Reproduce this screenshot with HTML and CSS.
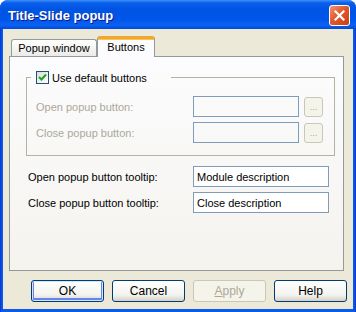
FILE: index.html
```html
<!DOCTYPE html>
<html lang="en">
<head>
  <meta charset="UTF-8" />
  <title>Title-Slide popup</title>
  <link rel="stylesheet" href="styles.css">
</head>
<body>
  <div class="window">
    <div class="titlebar">
      <span class="title">Title-Slide popup</span>
      <button class="close" title="Close">
        <svg width="11" height="11" viewBox="0 0 11 11"><path d="M1.5 1.5 L9.5 9.5 M9.5 1.5 L1.5 9.5" stroke="#fff" stroke-width="2.2" stroke-linecap="square"/></svg>
      </button>
    </div>

    <div class="frame">
      <div class="tabs">
        <div class="tab">Popup window</div>
        <div class="tab active">Buttons</div>
      </div>

      <div class="panel">
        <fieldset class="group">
          <legend>
            <label class="check">
              <span class="box"><svg width="9" height="9" viewBox="0 0 9 9"><path d="M1 4 L3.5 6.5 L8 1.5" fill="none" stroke="#21a121" stroke-width="2"/></svg></span>
              Use default buttons
            </label>
          </legend>
          <div class="row disabled">
            <label>Open popup button:</label>
            <input type="text" disabled>
            <button class="browse" disabled>...</button>
          </div>
          <div class="row disabled">
            <label>Close popup button:</label>
            <input type="text" disabled>
            <button class="browse" disabled>...</button>
          </div>
        </fieldset>

        <div class="fields">
          <div class="row">
            <label>Open popup button tooltip:</label>
            <input type="text" class="wide" value="Module description">
          </div>
          <div class="row">
            <label>Close popup button tooltip:</label>
            <input type="text" class="wide" value="Close description">
          </div>
        </div>
      </div>

      <div class="actions">
        <button class="btn default">OK</button>
        <button class="btn">Cancel</button>
        <button class="btn" disabled><u>A</u>pply</button>
        <button class="btn">Help</button>
      </div>
    </div>
  </div>
</body>
</html>
```

FILE: styles.css
```css
body {
  margin: 0;
  font-family: "Liberation Sans", Arial, sans-serif;
  font-size: 11px;
  color: #000;
  background: #fff;
}

.window {
  width: 356px;
  height: 312px;
  background: linear-gradient(90deg, #0831d9 0, #0b5be8 2px, #0b5be8 354px, #0831d9 356px);
  border-radius: 8px 8px 0 0;
  display: flex;
  flex-direction: column;
  overflow: hidden;
}

.titlebar {
  height: 29px;
  flex: none;
  display: flex;
  align-items: center;
  justify-content: space-between;
  padding: 0 6px 0 8px;
  background: linear-gradient(#3d8ff7 0, #0a5eec 3px, #0054e3 9px, #0056ea 20px, #0a62f2 25px, #004ad9 29px);
}

.title {
  color: #fff;
  font-weight: bold;
  font-size: 13px;
  text-shadow: 1px 1px #0a1883;
  margin-top: 1px;
}

.close {
  width: 21px;
  height: 21px;
  padding: 0;
  border: 1px solid #fff;
  border-radius: 3px;
  background: linear-gradient(135deg, #f59272 0, #e2582d 45%, #c8400f 100%);
  display: flex;
  align-items: center;
  justify-content: center;
  margin-top: 2px;
}

.frame {
  flex: 1;
  margin: 0 3px 3px 3px;
  background: #ece9d8;
  display: flex;
  flex-direction: column;
}

.tabs {
  height: 20px;
  margin-top: 7px;
  padding-left: 8px;
  display: flex;
  align-items: flex-end;
}

.tab {
  box-sizing: border-box;
  width: 86px;
  height: 17px;
  border: 1px solid #919b9c;
  border-bottom: none;
  border-radius: 3px 3px 0 0;
  background: linear-gradient(#ffffff, #ecebe6);
  text-align: center;
  line-height: 17px;
}

.tab.active {
  width: 58px;
  height: 21px;
  margin-bottom: -1px;
  position: relative;
  border-top: 3px solid #f0a63a;
  box-shadow: inset 0 1px 0 #ffc83c;
  background: #fcfcfe;
  line-height: 16px;
}

.panel {
  box-sizing: border-box;
  width: 335px;
  height: 215px;
  margin-left: 6px;
  border: 1px solid #919b9c;
  background: linear-gradient(#fcfcfe, #f4f3ee);
  padding: 14px 0 0 16px;
}

.group {
  box-sizing: border-box;
  width: 309px;
  margin: 0;
  padding: 12px 0 12px 4px;
  border: 1px solid #d0d0bf;
  border-color: #b5b2a4;
}

.group legend {
  box-sizing: border-box;
  width: 140px;
  padding: 0 0 0 5px;
}

.check {
  display: flex;
  align-items: center;
  gap: 3px;
}

.box {
  box-sizing: border-box;
  width: 13px;
  height: 13px;
  border: 1px solid #1c5180;
  background: linear-gradient(135deg, #dcdcd7, #ffffff);
  display: flex;
  align-items: center;
  justify-content: center;
}

.row {
  display: flex;
  align-items: center;
  height: 21px;
}

.row + .row {
  margin-top: 5px;
}

.group .row label {
  width: 157px;
  margin-left: 5px;
}

.row.disabled label {
  color: #aca899;
}

input {
  box-sizing: border-box;
  height: 21px;
  width: 106px;
  border: 1px solid #7f9db9;
  padding: 0 3px;
  font: inherit;
  background: #fff;
}

input:disabled {
  background: transparent;
}

.browse {
  box-sizing: border-box;
  width: 19px;
  height: 20px;
  margin-left: 5px;
  padding: 0;
  border: 1px solid #c9c7ba;
  border-radius: 3px;
  background: #f5f4ea;
  color: #aca899;
  font: inherit;
  font-size: 9px;
}

.fields {
  margin-top: 10px;
  margin-left: 2px;
}

.fields .row label {
  width: 165px;
}

input.wide {
  width: 136px;
}

.actions {
  margin-top: 9px;
  display: flex;
  justify-content: flex-end;
  gap: 8px;
  padding-right: 6px;
}

.btn {
  box-sizing: border-box;
  width: 73px;
  height: 22px;
  border: 1px solid #003c74;
  border-radius: 3px;
  background: linear-gradient(#ffffff, #f3f3ef 70%, #d6d0c5);
  font: inherit;
  font-size: 12px;
  color: #000;
  padding: 0;
}

.btn.default {
  box-shadow: inset 0 0 0 1px #cee7ff, inset 0 -1px 0 2px #6982ee;
}

.btn:disabled {
  border-color: #c9c7ba;
  background: #f5f4ea;
  color: #aca899;
}
```
